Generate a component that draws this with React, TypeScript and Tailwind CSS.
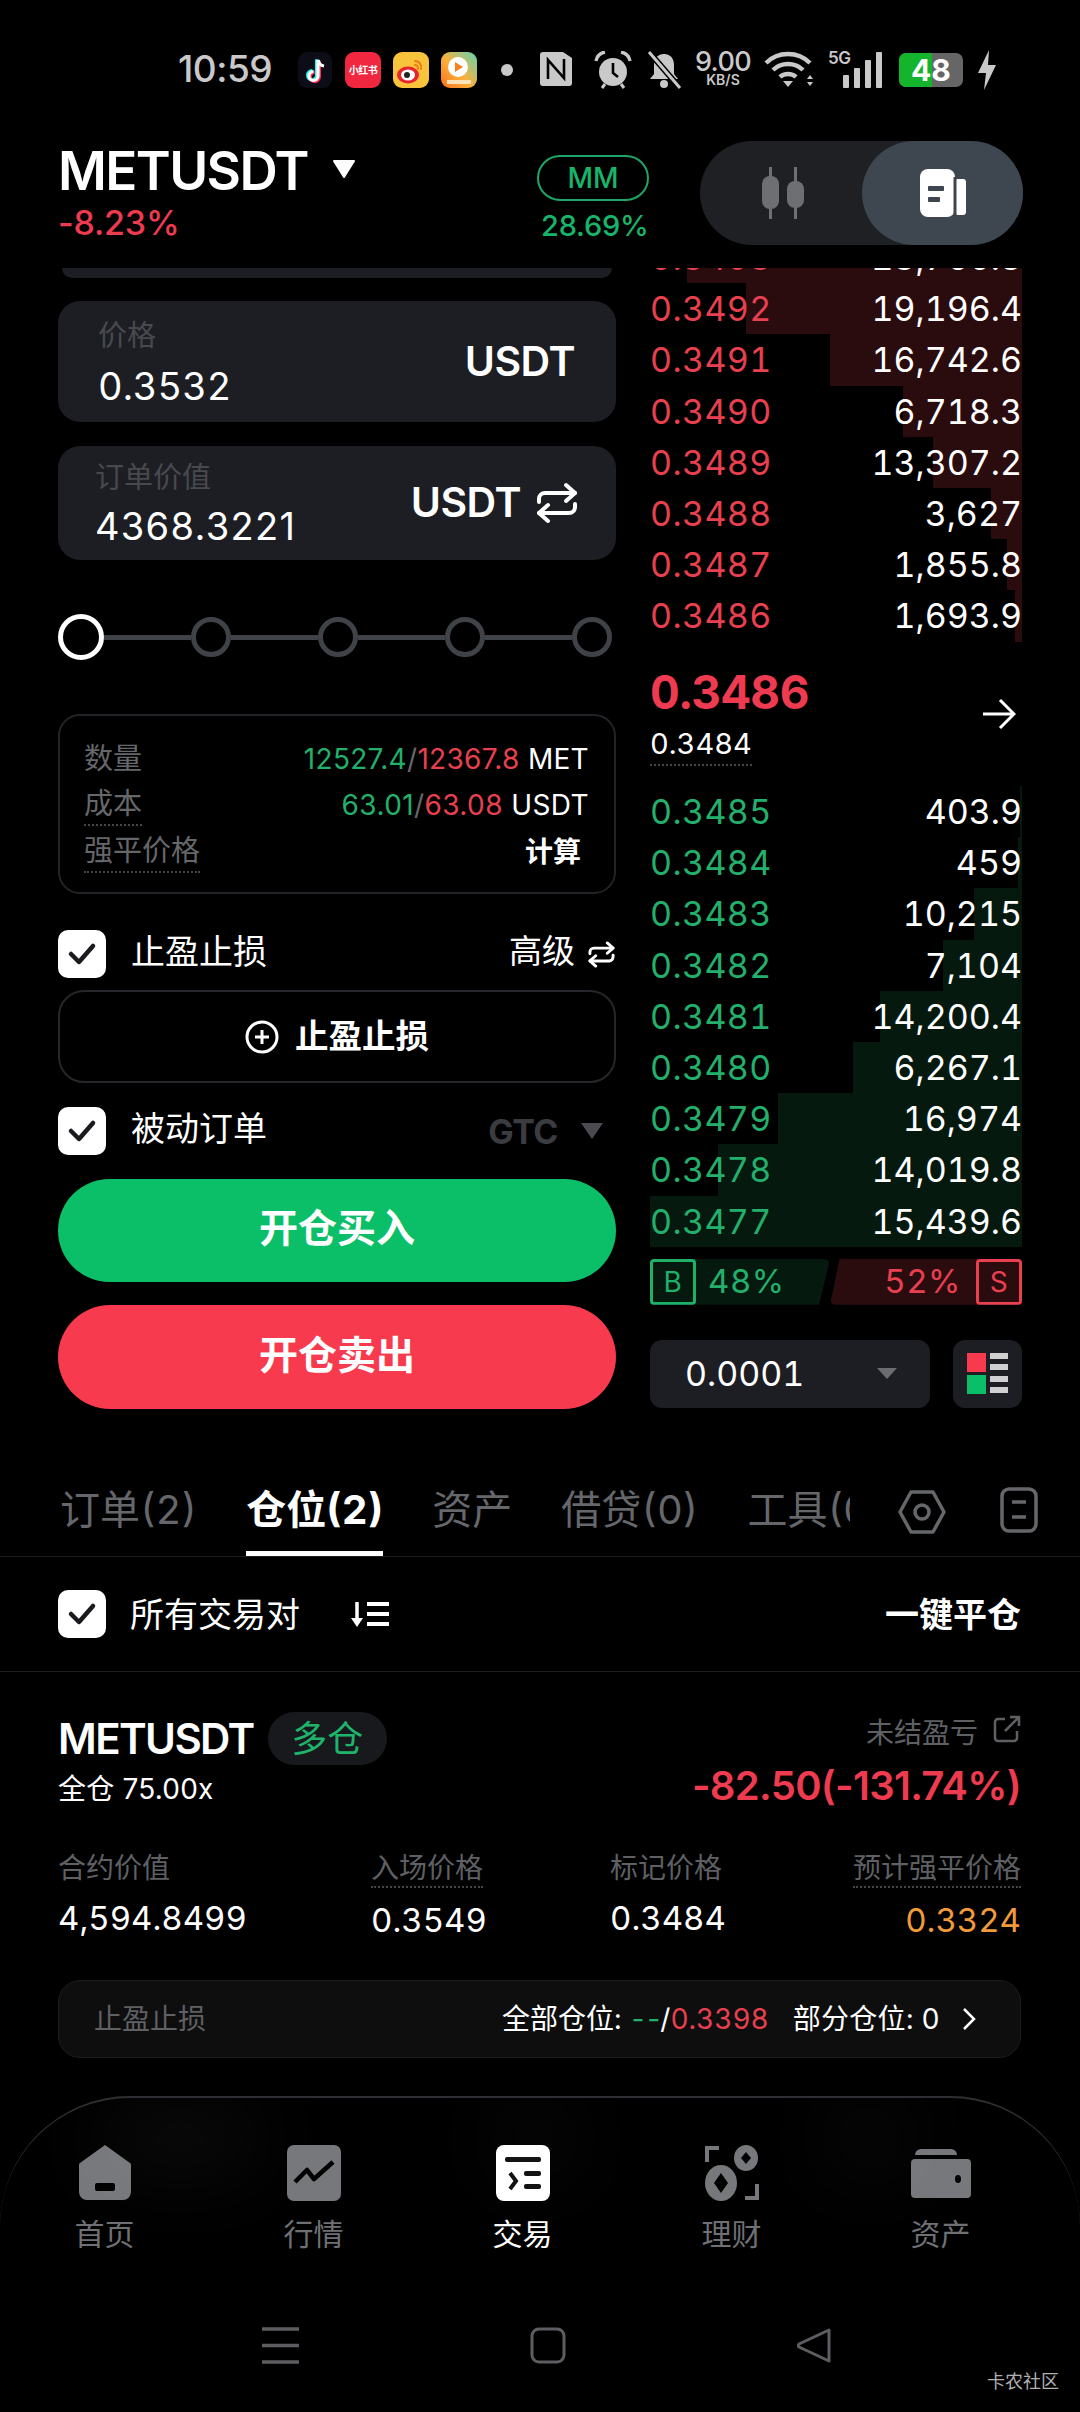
import React from "react";

const asks: [string, string, number][] = [
  ["0.3493", "23,760.3", 335],
  ["0.3492", "19,196.4", 276],
  ["0.3491", "16,742.6", 192],
  ["0.3490", "6,718.3", 119],
  ["0.3489", "13,307.2", 89],
  ["0.3488", "3,627", 31],
  ["0.3487", "1,855.8", 15],
  ["0.3486", "1,693.9", 7],
];
const bids: [string, string, number][] = [
  ["0.3485", "403.9", 2],
  ["0.3484", "459", 4],
  ["0.3483", "10,215", 48],
  ["0.3482", "7,104", 79],
  ["0.3481", "14,200.4", 142],
  ["0.3480", "6,267.1", 169],
  ["0.3479", "16,974", 244],
  ["0.3478", "14,019.8", 304],
  ["0.3477", "15,439.6", 372],
];

function BookRow({ p, q, w, side }: { p: string; q: string; w: number; side: "a" | "b" }) {
  return (
    <div className="relative h-[51.2px] flex items-center justify-between pr-0 text-[34px] tabular-nums">
      <div
        className={side === "a" ? "absolute right-0 top-0 bottom-0 bg-[#2a0c0f]" : "absolute right-0 top-0 bottom-0 bg-[#05190f]"}
        style={{ width: w }}
      />
      <span className={side === "a" ? "relative tracking-[0.4px] text-[#e8404f]" : "relative tracking-[0.4px] text-[#22b06c]"}>{p}</span>
      <span className="relative text-white">{q}</span>
    </div>
  );
}

function Check() {
  return (
    <div className="w-[48px] h-[48px] rounded-[10px] bg-white flex items-center justify-center shrink-0">
      <svg width="30" height="24" viewBox="0 0 30 24" fill="none">
        <path d="M4 12l8 8L26 4" stroke="#1a1b1f" strokeWidth="4.5" strokeLinecap="round" strokeLinejoin="round" />
      </svg>
    </div>
  );
}

function Swap({ size, sw }: { size: number; sw: number }) {
  return (
    <svg width={size} height={size} viewBox="0 0 42 42" fill="none" stroke="white" strokeWidth={sw} strokeLinecap="round" strokeLinejoin="round">
      <path d="M30 3l9 8-9 8" />
      <path d="M39 11H9a6 6 0 0 0-6 6v3" />
      <path d="M12 39l-9-8 9-8" />
      <path d="M3 31h30a6 6 0 0 0 6-6v-3" />
    </svg>
  );
}

function Statusbar() {
  return (
    <div className="h-[100px] pl-[178px] pt-[50px] flex items-start text-[#c9c9c9]">
      <span className="w-[120px] text-[37px] leading-[38px] font-medium tracking-[-0.5px]">10:59</span>
      {/* TikTok */}
      <svg width="36" height="36" viewBox="0 0 36 36" className="mt-[2px]">
        <rect width="34" height="36" rx="9" fill="#0d0d18" />
        <path d="M20 8v16a4.5 4.5 0 1 1-4.5-4.5" fill="none" stroke="#25f4ee" strokeWidth="3.6" transform="translate(-1.2,-0.8)" />
        <path d="M20 8v16a4.5 4.5 0 1 1-4.5-4.5" fill="none" stroke="#fe2c55" strokeWidth="3.6" transform="translate(1.2,0.8)" />
        <path d="M20 8v16a4.5 4.5 0 1 1-4.5-4.5" fill="none" stroke="#fff" strokeWidth="3.2" />
        <path d="M20 8c.6 3.6 3 5.6 6 6" fill="none" stroke="#fff" strokeWidth="3.2" />
      </svg>
      <div className="ml-[11px] mt-[2px] w-[36px] h-[36px] rounded-[9px] bg-[#f0273f] flex items-center justify-center text-[10px] font-bold text-white whitespace-nowrap tracking-[-0.5px]">小红书</div>
      {/* Weibo */}
      <svg width="36" height="36" viewBox="0 0 36 36" className="ml-[12px] mt-[2px]">
        <rect width="36" height="36" rx="9" fill="#f8c43c" />
        <ellipse cx="15" cy="23" rx="11" ry="8.5" fill="#e6262e" />
        <ellipse cx="15" cy="23" rx="7" ry="5.5" fill="#fff" />
        <circle cx="14" cy="23" r="3" fill="#222" />
        <path d="M22 9c4 0 7 3 6 8M22 13c2 0 3.500 1.500 3 4" fill="none" stroke="#f07a1a" strokeWidth="2" strokeLinecap="round" />
      </svg>
      {/* Video */}
      <svg width="36" height="36" viewBox="0 0 36 36" className="ml-[12px] mt-[2px]">
        <defs>
          <linearGradient id="vg" x1="1" y1="0" x2="0" y2="1">
            <stop offset="0" stopColor="#5fd6b4" />
            <stop offset="0.55" stopColor="#fbb03a" />
            <stop offset="1" stopColor="#f8721e" />
          </linearGradient>
        </defs>
        <rect width="36" height="36" rx="9" fill="url(#vg)" />
        <circle cx="17" cy="15" r="10" fill="#fff" />
        <path d="M14 10l8 5-8 5z" fill="#f8821e" />
        <rect x="6" y="28" width="24" height="4" fill="#ffe3b8" />
      </svg>
      <div className="ml-[24px] mt-[14px] w-[12px] h-[12px] rounded-full bg-[#c9c9c9]" />
      {/* NFC */}
      <svg width="36" height="36" viewBox="0 0 36 36" className="ml-[25px] mt-px">
        <path d="M2 4a3 3 0 0 1 3-3h20l9 6v25a3 3 0 0 1-3 3H5a3 3 0 0 1-3-3z" fill="#c9c9c9" />
        <path d="M10 28V9l16 18V8" fill="none" stroke="#000" strokeWidth="2.6" />
      </svg>
      {/* Alarm */}
      <svg width="38" height="38" viewBox="0 0 38 38" className="ml-[20px] mt-px">
        <circle cx="19" cy="21" r="14" fill="#c9c9c9" />
        <path d="M19 12v10l5 4" fill="none" stroke="#000" strokeWidth="2.6" />
        <path d="M2 10c1-5 4-8 9-9M36 10c-1-5-4-8-9-9" fill="none" stroke="#c9c9c9" strokeWidth="3.4" />
        <path d="M8 37l3-4M30 37l-3-4" stroke="#c9c9c9" strokeWidth="3" />
      </svg>
      {/* Bell off */}
      <svg width="36" height="38" viewBox="0 0 36 38" className="ml-[14px] mt-px">
        <path d="M18 3c-7 0-10 5-10 11v9l-4 5h28l-4-5v-9c0-6-3-11-10-11z" fill="#c9c9c9" />
        <circle cx="18" cy="33" r="4" fill="#c9c9c9" />
        <path d="M3 1l31 36" stroke="#000" strokeWidth="6" />
        <path d="M3 1l31 36" stroke="#c9c9c9" strokeWidth="3" />
      </svg>
      <div className="ml-[10px] w-[62px] flex flex-col items-center">
        <span className="text-[27px] leading-[23px] font-medium tracking-[-0.6px]">9.00</span>
        <span className="text-[14px] leading-[14px] font-semibold">KB/S</span>
      </div>
      {/* Wifi */}
      <svg width="50" height="38" viewBox="0 0 50 38" className="ml-[10px]">
        <path d="M2 13c12-12 32-12 44 0M9 20c8-8 22-8 30 0M16 27c4-4 12-4 16 0" fill="none" stroke="#c9c9c9" strokeWidth="4.4" />
        <path d="M24 37l-5-6h10z" fill="#c9c9c9" />
        <path d="M46 25l-3 4h6zM46 36l-3-4h6z" fill="#c9c9c9" />
      </svg>
      {/* 5G + signal */}
      <div className="ml-[14px] relative w-[54px] h-[38px]">
        <span className="absolute left-0 -top-[1px] text-[17px] leading-[18px] font-semibold tracking-[-0.5px]">5G</span>
        <div className="absolute right-0 top-0 bottom-0 flex items-end gap-[5px]">
          <div className="w-[6px] h-[13px] bg-[#c9c9c9] rounded-[1px]" />
          <div className="w-[6px] h-[20px] bg-[#c9c9c9] rounded-[1px]" />
          <div className="w-[6px] h-[28px] bg-[#c9c9c9] rounded-[1px]" />
          <div className="w-[6px] h-[36px] bg-[#c9c9c9] rounded-[1px]" />
        </div>
      </div>
      {/* Battery */}
      <div className="ml-[17px] mt-[3px] w-[64px] h-[34px] rounded-[7px] bg-[#666] relative overflow-hidden flex items-center justify-center">
        <div className="absolute left-0 top-0 bottom-0 w-[33px] bg-[#14b52c]" />
        <span className="relative text-white text-[30px] leading-[30px] font-bold">48</span>
      </div>
      <svg width="20" height="40" viewBox="0 0 20 40" className="ml-[14px]">
        <path d="M12 0L1 23h8L7 40 19 15h-8z" fill="#c9c9c9" />
      </svg>
    </div>
  );
}

function Header() {
  return (
    <div className="h-[168px] pl-[58px] pr-[57px] flex items-start">
      <div className="w-[479px] pt-[43px]">
        <div className="flex items-center">
          <span className="text-[53px] leading-[56px] font-semibold text-white tracking-[-1.6px]">METUSDT</span>
          <svg width="24" height="20" viewBox="0 0 24 20" className="ml-[24px] -mt-[4px]">
            <path d="M2 2h20L12 18z" fill="#fff" stroke="#fff" strokeWidth="2" strokeLinejoin="round" />
          </svg>
        </div>
        <div className="mt-[5px] text-[34px] leading-[38px] font-medium text-[#ee3b50] tracking-[-0.2px]">-8.23%</div>
      </div>
      <div className="w-[163px] pt-[55px] flex flex-col items-start">
        <div className="w-[112px] h-[46px] rounded-full border-2 border-[#1fa566] flex items-center justify-center text-[28px] font-medium text-[#17b56b]">MM</div>
        <div className="mt-[9px] ml-[4px] text-[29px] leading-[32px] font-medium text-[#17b56b] tracking-[-0.2px]">28.69%</div>
      </div>
      <div className="mt-[41px] w-[323px] h-[104px] rounded-full bg-[#1e2024] flex justify-end">
        <div className="flex-1 flex items-center justify-center">
          <svg width="44" height="52" viewBox="0 0 44 52" fill="#6e6f72" className="ml-[6px]">
            <rect x="0" y="9" width="17" height="33" rx="8" />
            <rect x="7" y="0" width="3" height="52" />
            <rect x="25" y="14" width="17" height="27" rx="8" />
            <rect x="32" y="0" width="3" height="52" />
          </svg>
        </div>
        <div className="w-[161px] h-[104px] rounded-full bg-[#3e4650] flex items-center justify-center">
          <svg width="46" height="48" viewBox="0 0 46 48">
            <rect x="0" y="0" width="35" height="48" rx="8" fill="#fff" />
            <rect x="35" y="10" width="11" height="36" rx="3" fill="#fff" />
            <rect x="33.500" y="8" width="3" height="40" fill="#3e4650" />
            <rect x="8" y="17" width="16" height="5" rx="1" fill="#3e4650" />
            <rect x="8" y="28" width="12" height="5" rx="1" fill="#3e4650" />
          </svg>
        </div>
      </div>
    </div>
  );
}

function LeftPanel() {
  return (
    <div className="w-[558px] ml-[58px] flex flex-col">
      <div className="mx-[4px] h-[10px] rounded-b-[16px] bg-[#1d1e24]" />
      <div className="mt-[23px] h-[121px] rounded-[22px] bg-[#1d1e24] pl-[40px] pr-[41px] flex items-center justify-between">
        <div className="flex flex-col mt-[3px]">
          <span className="text-[29px] leading-[34px] text-[#48494e]">价格</span>
          <span className="mt-[11px] text-[38px] leading-[44px] text-white tabular-nums">0.3532</span>
        </div>
        <span className="text-[41px] font-semibold text-white tracking-[-0.5px]">USDT</span>
      </div>
      <div className="mt-[24px] h-[114px] rounded-[22px] bg-[#1d1e24] pl-[37px] pr-[38px] flex items-center justify-between">
        <div className="flex flex-col mt-[3px]">
          <span className="text-[29px] leading-[34px] text-[#48494e]">订单价值</span>
          <span className="mt-[9px] text-[38px] leading-[44px] text-white tracking-[1.3px]">4368.3221</span>
        </div>
        <div className="flex items-center gap-[15px]">
          <span className="text-[41px] font-semibold text-white tracking-[-0.5px]">USDT</span>
          <Swap size={42} sw={4} />
        </div>
      </div>
      {/* slider */}
      <div className="mt-[54px] mr-[4px] h-[46px] flex items-center relative">
        <div className="w-[46px] h-[46px] rounded-full border-[5px] border-white shrink-0" />
        {[0, 1, 2, 3].map((i) => (
          <React.Fragment key={i}>
            <div className="h-[5px] flex-1 bg-[#3f4247]" />
            <div className="w-[40px] h-[40px] rounded-full border-[5px] border-[#3f4247] shrink-0" />
          </React.Fragment>
        ))}
      </div>
      {/* info */}
      <div className="mt-[54px] h-[180px] rounded-[22px] border-2 border-[#222327] pl-[24px] pr-[25px] pt-[20px] text-[28px]">
        <div className="h-[46px] flex items-center justify-between">
          <span className="text-[#66676b] text-[29px]">数量</span>
          <span className="tracking-[0.3px]">
            <span className="text-[#22b06c]">12527.4</span>
            <span className="text-[#66676b]">/</span>
            <span className="text-[#e8404f]">12367.8</span>
            <span className="text-white"> MET</span>
          </span>
        </div>
        <div className="h-[46px] flex items-center justify-between">
          <span className="text-[#66676b] text-[29px] leading-[40px] border-b-2 border-dotted border-[#44454a]">成本</span>
          <span className="tracking-[0.4px]">
            <span className="text-[#22b06c]">63.01</span>
            <span className="text-[#66676b]">/</span>
            <span className="text-[#e8404f]">63.08</span>
            <span className="text-white"> USDT</span>
          </span>
        </div>
        <div className="h-[48px] flex items-center justify-between">
          <span className="text-[#66676b] text-[29px] leading-[40px] border-b-2 border-dotted border-[#44454a]">强平价格</span>
          <span className="text-white font-bold mr-[8px]">计算</span>
        </div>
      </div>
      {/* TP row */}
      <div className="mt-[36px] h-[48px] flex items-center text-[34px] text-white">
        <Check />
        <span className="ml-[25px] -mt-[5px]">止盈止损</span>
        <span className="ml-auto -mt-[5px] text-[33px]">高级</span>
        <span className="ml-[13px] mr-px"><Swap size={27} sw={4.5} /></span>
      </div>
      <div className="mt-[12px] h-[93px] rounded-[26px] border-2 border-[#26272b] flex items-center justify-center text-white">
        <svg width="34" height="34" viewBox="0 0 34 34" fill="none" stroke="white" strokeWidth="3">
          <circle cx="17" cy="17" r="15" />
          <path d="M17 10v14M10 17h14" />
        </svg>
        <span className="ml-[16px] text-[33.500px] font-bold">止盈止损</span>
      </div>
      <div className="mt-[24px] h-[48px] flex items-center text-[34px] text-white">
        <Check />
        <span className="ml-[25px] -mt-[5px]">被动订单</span>
        <span className="ml-auto text-[34px] font-bold text-[#3a3c40] tracking-[-0.5px]">GTC</span>
        <svg width="24" height="18" viewBox="0 0 24 18" className="ml-[22px] mr-[12px]">
          <path d="M1 1h22L12 17z" fill="#494b50" />
        </svg>
      </div>
      <div className="mt-[24px] h-[103px] rounded-full bg-[#0bbf69] flex items-center justify-center pb-[4px] text-[39px] font-bold text-white">开仓买入</div>
      <div className="mt-[23px] h-[104px] rounded-full bg-[#f83a4e] flex items-center justify-center pb-[4px] text-[39px] font-bold text-white">开仓卖出</div>
    </div>
  );
}

function RightPanel() {
  return (
    <div className="w-[372px] ml-[34px] flex flex-col">
      <div className="h-[374px] overflow-hidden">
        <div className="-mt-[36px]">
          {asks.map((r) => (
            <BookRow key={r[0]} p={r[0]} q={r[1]} w={r[2]} side="a" />
          ))}
        </div>
      </div>
      <div className="h-[144px] flex items-start justify-between">
        <div className="flex flex-col items-start">
          <span className="mt-[25px] text-[46px] leading-[50px] font-bold text-[#ee3b50] tracking-[-0.3px] tabular-nums">0.3486</span>
          <span className="mt-[9px] text-[29px] leading-[36px] text-white border-b-2 border-dotted border-[#44454a] pb-[2px] tabular-nums">0.3484</span>
        </div>
        <svg width="34" height="34" viewBox="0 0 34 34" fill="none" stroke="white" strokeWidth="3" className="mt-[55px] mr-[6px]">
          <path d="M1 17h31M18 3l14 14-14 14" />
        </svg>
      </div>
      <div>
        {bids.map((r) => (
          <BookRow key={r[0]} p={r[0]} q={r[1]} w={r[2]} side="b" />
        ))}
      </div>
      {/* ratio */}
      <div className="mt-[12px] h-[46px] flex text-[33px] tracking-[0.5px] tabular-nums">
        <div className="w-[180px] flex items-center bg-[#05190f] rounded-[6px] [clip-path:polygon(0_0,100%_0,94%_100%,0_100%)]">
          <div className="w-[46px] h-[46px] rounded-[4px] border-[3px] border-[#1fb06a] flex items-center justify-center text-[28px] text-[#1fb06a]">B</div>
          <span className="ml-[12px] text-[#22b06c]">48%</span>
        </div>
        <div className="w-[192px] flex items-center justify-end bg-[#2a0c0f] rounded-[6px] [clip-path:polygon(5%_0,100%_0,100%_100%,0_100%)]">
          <span className="mr-[15px] text-[#e8404f]">52%</span>
          <div className="w-[46px] h-[46px] rounded-[4px] border-[3px] border-[#e8404f] flex items-center justify-center text-[28px] text-[#e8404f]">S</div>
        </div>
      </div>
      {/* select */}
      <div className="mt-[35px] flex justify-between">
        <div className="w-[280px] h-[68px] rounded-[12px] bg-[#1d1e24] flex items-center pl-[35px] pr-[33px] justify-between">
          <span className="text-[34px] text-white tabular-nums">0.0001</span>
          <svg width="20" height="11" viewBox="0 0 20 11"><path d="M0 0h20l-10 11z" fill="#6b6c70" /></svg>
        </div>
        <div className="w-[69px] h-[68px] rounded-[12px] bg-[#1d1e24] flex items-center justify-center">
          <svg width="41" height="41" viewBox="0 0 41 41">
            <rect x="0" y="0" width="19" height="19" fill="#f83a4e" />
            <rect x="0" y="22" width="19" height="19" fill="#0bbf69" />
            <rect x="23" y="0" width="18" height="6" fill="#cfcfcf" />
            <rect x="23" y="11" width="18" height="6" fill="#cfcfcf" />
            <rect x="23" y="23" width="18" height="6" fill="#cfcfcf" />
            <rect x="23" y="34" width="18" height="6" fill="#cfcfcf" />
          </svg>
        </div>
      </div>
    </div>
  );
}

function Tabs() {
  return (
    <div className="h-[87px] mt-[37px] border-b border-[#1c1d20] flex text-[40px] text-[#66676b] tabular-nums">
      <div className="w-[850px] pl-[60px] flex gap-[49px] overflow-hidden whitespace-nowrap">
        <span className="pt-[10px]">订单(2)</span>
        <span className="relative pt-[10px] font-bold text-white h-[87px]">
          仓位(2)
          <span className="absolute left-0 right-0 bottom-0 h-[6px] bg-white" />
        </span>
        <span className="pt-[10px]">资产</span>
        <span className="pt-[10px]">借贷(0)</span>
        <span className="pt-[10px]">工具(0)</span>
      </div>
      <svg width="48" height="44" viewBox="0 0 48 44" fill="none" stroke="#66676b" strokeWidth="3.5" className="ml-[48px] mt-[20px]">
        <path d="M13 2h22l11 20-11 20H13L2 22z" strokeLinejoin="round" />
        <circle cx="24" cy="22" r="7" />
      </svg>
      <svg width="38" height="46" viewBox="0 0 38 46" fill="none" stroke="#66676b" strokeWidth="3.5" className="ml-[54px] mt-[17px]">
        <rect x="2" y="2" width="34" height="42" rx="7" />
        <path d="M12 15h14M12 30h14" />
      </svg>
    </div>
  );
}

function Filter() {
  return (
    <div className="h-[115px] border-b border-[#1c1d20] pl-[58px] pr-[59px] flex items-center">
      <Check />
      <span className="ml-[24px] text-[34px] text-white">所有交易对</span>
      <svg width="40" height="28" viewBox="0 0 40 28" className="ml-[50px]">
        <path d="M7 2v20" stroke="#fff" strokeWidth="3.500" />
        <path d="M1 18h12l-6 9z" fill="#fff" />
        <path d="M17 4h22M17 14h22M17 24h22" stroke="#fff" strokeWidth="4" />
      </svg>
      <span className="ml-auto text-[34px] font-bold text-white">一键平仓</span>
    </div>
  );
}

function Field({ label, value, dotted, right, cls, valCls }: { label: string; value: string; dotted?: boolean; right?: boolean; cls: string; valCls?: string }) {
  return (
    <div className={cls + (right ? " flex flex-col items-end" : " flex flex-col items-start")}>
      <span className={"text-[28px] leading-[36px] text-[#5f6064]" + (dotted ? " border-b-2 border-dotted border-[#44454a]" : "")}>{label}</span>
      <span className={"mt-[12px] text-[33px] leading-[40px] tabular-nums " + (valCls || "text-white")}>{value}</span>
    </div>
  );
}

function Position() {
  return (
    <div className="h-[424px] pl-[58px] pr-[59px] pt-[40px]">
      <div className="flex justify-between">
        <div>
          <div className="flex items-center h-[53px]">
            <span className="text-[42px] font-semibold text-white tracking-[-1.6px]">METUSDT</span>
            <span className="ml-[14px] w-[119px] h-[53px] rounded-full bg-[#17191c] flex items-center justify-center text-[36px] text-[#1eb56b]">多仓</span>
          </div>
          <div className="mt-[4px] text-[28px] leading-[40px] text-white tracking-[0.2px]">全仓 75.00x</div>
        </div>
        <div className="flex flex-col items-end">
          <div className="flex items-center h-[42px]">
            <span className="text-[28px] text-[#5f6064]">未结盈亏</span>
            <svg width="28" height="28" viewBox="0 0 28 28" fill="none" stroke="#5f6064" strokeWidth="2.500" className="ml-[15px] -mt-[8px]">
              <path d="M12 4H5a3 3 0 0 0-3 3v16a3 3 0 0 0 3 3h16a3 3 0 0 0 3-3v-7" />
              <path d="M12 16L26 2M17 2h9v9" />
            </svg>
          </div>
          <div className="mt-[8px] text-[40px] leading-[48px] font-semibold text-[#ee3b50] tracking-[-0.7px]">-82.50(-131.74%)</div>
        </div>
      </div>
      <div className="mt-[40px] flex">
        <Field cls="w-[313px]" label="合约价值" value="4,594.8499" />
        <Field cls="w-[239px]" label="入场价格" value="0.3549" dotted />
        <Field cls="w-[241px]" label="标记价格" value="0.3484" />
        <Field cls="flex-1" label="预计强平价格" value="0.3324" dotted right valCls="text-[#f09a3c]" />
      </div>
      <div className="mt-[40px] h-[78px] rounded-[22px] bg-[#0e0e0f] border border-[#1c1d20] pl-[35px] pr-[44px] flex items-center text-[28px] tabular-nums">
        <span className="text-[#5f6064]">止盈止损</span>
        <span className="ml-auto text-white">
          全部仓位: <span className="text-[#22b06c] tracking-[-2.5px]">--</span>/<span className="text-[#e8404f]">0.3398</span>
        </span>
        <span className="ml-[24px] text-white tracking-[0.3px]">部分仓位: 0</span>
        <svg width="14" height="24" viewBox="0 0 14 24" fill="none" stroke="white" strokeWidth="2.500" className="ml-[22px]">
          <path d="M2 2l10 10L2 22" />
        </svg>
      </div>
    </div>
  );
}

function NavItem({ label, active, children }: { label: string; active?: boolean; children: React.ReactNode }) {
  return (
    <div className="w-[209px] flex flex-col items-center">
      <div className="h-[58px] flex items-center justify-center">{children}</div>
      <span className={"mt-[12px] text-[30px] leading-[40px] " + (active ? "text-white" : "text-[#6f7074]")}>{label}</span>
    </div>
  );
}

function Nav() {
  return (
    <div className="relative h-[184px] rounded-t-[130px] border-t-2 border-[#2e2f32] pt-[46px] flex overflow-hidden">
      <div className="absolute left-[100px] top-[10px] w-[160px] h-[60px] rounded-full bg-white/5 blur-2xl" />
      <div className="absolute left-[500px] top-[10px] w-[70px] h-[60px] rounded-full bg-white/5 blur-2xl" />
      <div className="absolute left-[830px] top-[10px] w-[80px] h-[60px] rounded-full bg-white/5 blur-2xl" />
      <NavItem label="首页">
        <svg width="54" height="56" viewBox="0 0 54 56">
          <path d="M27 0L52 18a2 2 0 0 1 1 2v27a8 8 0 0 1-8 8H9a8 8 0 0 1-8-8V20a2 2 0 0 1 1-2z" fill="#77787c" />
          <rect x="17" y="38" width="20" height="8" rx="2" fill="#000" />
        </svg>
      </NavItem>
      <NavItem label="行情">
        <svg width="54" height="56" viewBox="0 0 54 56">
          <rect width="54" height="56" rx="7" fill="#77787c" />
          <path d="M8 37L20 25l7 9L46 17" fill="none" stroke="#000" strokeWidth="4.500" strokeLinejoin="round" />
        </svg>
      </NavItem>
      <NavItem label="交易" active>
        <svg width="54" height="56" viewBox="0 0 54 56">
          <rect width="54" height="56" rx="8" fill="#fff" />
          <rect x="9" y="12" width="36" height="5" rx="2" fill="#111" />
          <path d="M14 28l6 8-6 8" fill="none" stroke="#111" strokeWidth="4" />
          <rect x="28" y="26" width="17" height="5" rx="2" fill="#111" />
          <rect x="28" y="39" width="17" height="5" rx="2" fill="#111" />
        </svg>
      </NavItem>
      <NavItem label="理财">
        <svg width="54" height="56" viewBox="0 0 54 56">
          <path d="M14 3H2v14" fill="none" stroke="#77787c" strokeWidth="4" />
          <path d="M40 53h12V39" fill="none" stroke="#77787c" strokeWidth="4" />
          <ellipse cx="41" cy="13" rx="12" ry="13" fill="#77787c" />
          <path d="M41 7l5 6-5 6-5-6z" fill="#000" />
          <ellipse cx="16" cy="38" rx="16" ry="18" fill="#77787c" />
          <path d="M16 28l7 10-7 10-7-10z" fill="#000" />
        </svg>
      </NavItem>
      <NavItem label="资产">
        <svg width="60" height="50" viewBox="0 0 60 50">
          <path d="M4 7a6 6 0 0 1 6-6h30a6 6 0 0 1 6 6H4z" fill="#77787c" />
          <rect x="0" y="11" width="60" height="39" rx="4" fill="#77787c" />
          <ellipse cx="47" cy="31" rx="3" ry="4" fill="#000" />
        </svg>
      </NavItem>
    </div>
  );
}

function SystemNav() {
  return (
    <div className="relative h-[132px] pt-[47px] flex items-start">
      <svg width="37" height="37" viewBox="0 0 37 37" className="ml-[262px]">
        <path d="M0 2h37M0 18.500h37M0 35h37" stroke="#5d5e62" strokeWidth="3.500" />
      </svg>
      <svg width="36" height="37" viewBox="0 0 36 37" fill="none" className="ml-[231px]">
        <rect x="2" y="2" width="32" height="33" rx="7" stroke="#5d5e62" strokeWidth="3" />
      </svg>
      <svg width="36" height="37" viewBox="0 0 36 37" fill="none" className="ml-[230px]">
        <path d="M33 3v31L3 20a2 2 0 0 1 0-3z" stroke="#5d5e62" strokeWidth="3" strokeLinejoin="round" />
      </svg>
      <span className="absolute left-[987px] top-[90px] text-[18px] leading-[24px] text-[#b0b0b0]">卡农社区</span>
    </div>
  );
}

export default function App() {
  return (
    <div className="w-[1080px] h-[2412px] bg-black overflow-hidden font-[Inter,'Noto_Sans_CJK_SC',sans-serif] flex flex-col">
      <Statusbar />
      <Header />
      <div className="flex h-[1165px]">
        <LeftPanel />
        <RightPanel />
      </div>
      <Tabs />
      <Filter />
      <Position />
      <Nav />
      <SystemNav />
    </div>
  );
}
